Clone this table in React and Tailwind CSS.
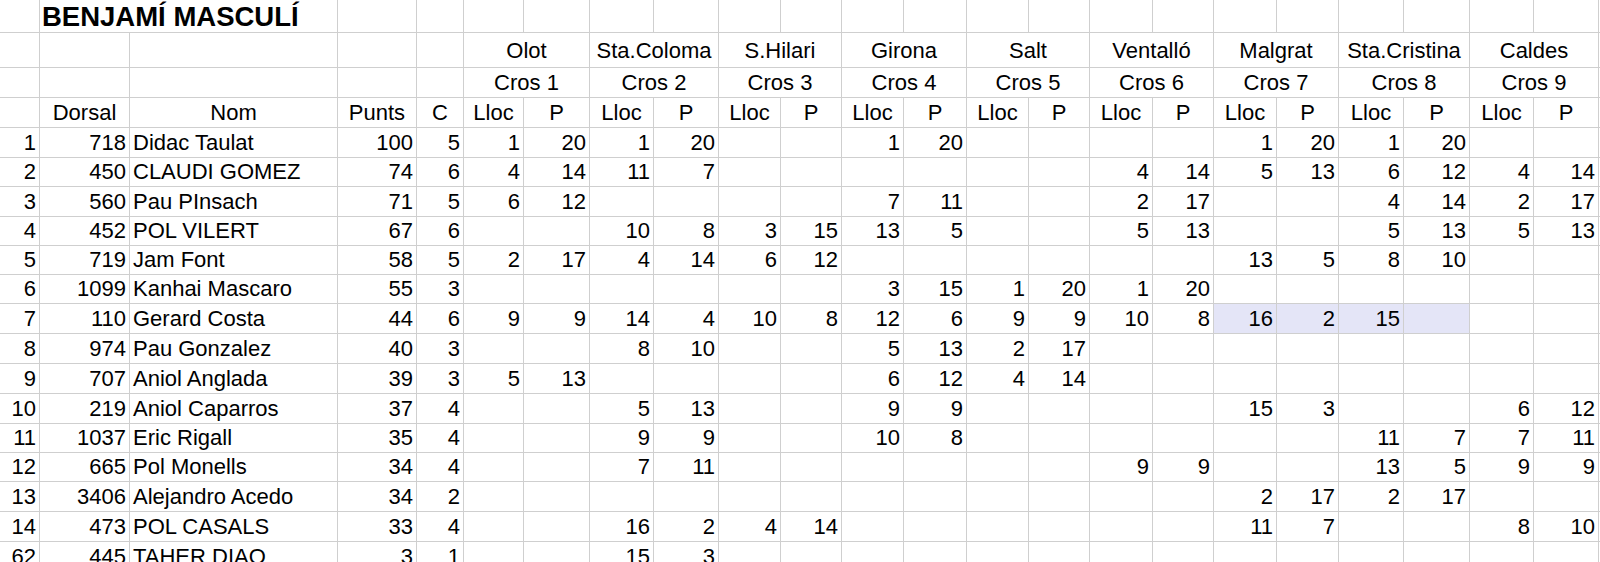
const cols =
  'grid grid-cols-[40px_90px_208px_79px_47px_60px_66px_64px_65px_62px_61px_62px_63px_62px_61px_63px_61px_63px_62px_65px_66px_64px_65px_60px]';

const cell = 'border-r border-b border-[#cfcfcf] overflow-visible whitespace-nowrap';

const races = [
  ['Olot', 'Cros 1'],
  ['Sta.Coloma', 'Cros 2'],
  ['S.Hilari', 'Cros 3'],
  ['Girona', 'Cros 4'],
  ['Salt', 'Cros 5'],
  ['Ventalló', 'Cros 6'],
  ['Malgrat', 'Cros 7'],
  ['Sta.Cristina', 'Cros 8'],
  ['Caldes', 'Cros 9'],
];

// [pos, dorsal, nom, punts, c, results (9 pairs), height class, highlighted result cells]
const rows = [
  ['1', '718', 'Didac Taulat', '100', '5', [[1, 20], [1, 20], [], [1, 20], [], [], [1, 20], [1, 20], []], 'h-[30px]'],
  ['2', '450', 'CLAUDI GOMEZ', '74', '6', [[4, 14], [11, 7], [], [], [], [4, 14], [5, 13], [6, 12], [4, 14]], 'h-[29px]'],
  ['3', '560', 'Pau PInsach', '71', '5', [[6, 12], [], [], [7, 11], [], [2, 17], [], [4, 14], [2, 17]], 'h-[30px]'],
  ['4', '452', 'POL VILERT', '67', '6', [[], [10, 8], [3, 15], [13, 5], [], [5, 13], [], [5, 13], [5, 13]], 'h-[29px]'],
  ['5', '719', 'Jam Font', '58', '5', [[2, 17], [4, 14], [6, 12], [], [], [], [13, 5], [8, 10], []], 'h-[29px]'],
  ['6', '1099', 'Kanhai Mascaro', '55', '3', [[], [], [], [3, 15], [1, 20], [1, 20], [], [], []], 'h-[29px]'],
  ['7', '110', 'Gerard Costa', '44', '6', [[9, 9], [14, 4], [10, 8], [12, 6], [9, 9], [10, 8], [16, 2], [15, ''], []], 'h-[30px]', [12, 13, 14, 15]],
  ['8', '974', 'Pau Gonzalez', '40', '3', [[], [8, 10], [], [5, 13], [2, 17], [], [], [], []], 'h-[30px]'],
  ['9', '707', 'Aniol Anglada', '39', '3', [[5, 13], [], [], [6, 12], [4, 14], [], [], [], []], 'h-[30px]'],
  ['10', '219', 'Aniol Caparros', '37', '4', [[], [5, 13], [], [9, 9], [], [], [15, 3], [], [6, 12]], 'h-[30px]'],
  ['11', '1037', 'Eric Rigall', '35', '4', [[], [9, 9], [], [10, 8], [], [], [], [11, 7], [7, 11]], 'h-[29px]'],
  ['12', '665', 'Pol Monells', '34', '4', [[], [7, 11], [], [], [], [9, 9], [], [13, 5], [9, 9]], 'h-[29px]'],
  ['13', '3406', 'Alejandro Acedo', '34', '2', [[], [], [], [], [], [], [2, 17], [2, 17], []], 'h-[30px]'],
  ['14', '473', 'POL CASALS', '33', '4', [[], [16, 2], [4, 14], [], [], [], [11, 7], [], [8, 10]], 'h-[30px]'],
  ['62', '445', 'TAHER DIAO', '3', '1', [[], [15, 3], [], [], [], [], [], [], []], 'h-[30px]'],
];

const Num = ({ children, hl }) => (
  <div className={`${cell} flex items-center justify-end pr-[3px] ${hl ? 'bg-[#e4e5f7]' : ''}`}>{children}</div>
);

export default function App() {
  return (
    <div className="w-[1600px] h-[562px] overflow-hidden bg-white text-black font-['Liberation_Sans',Arial,sans-serif] text-[22px] leading-none">
      {/* title row */}
      <div className={`${cols} h-[33px]`}>
        <div className={cell} />
        <div className={`${cell} col-span-2 flex items-center pl-[2px] pt-[1px] font-bold text-[27.5px]`}>BENJAMÍ MASCULÍ</div>
        <div className={cell} />
        <div className={cell} />
        {Array.from({ length: 19 }).map((_, i) => (
          <div key={i} className={cell} />
        ))}
      </div>

      {/* race names */}
      <div className={`${cols} h-[35px]`}>
        {Array.from({ length: 5 }).map((_, i) => (
          <div key={i} className={cell} />
        ))}
        {races.map(([city]) => (
          <div key={city} className={`${cell} col-span-2 flex items-end justify-center pb-[5px]`}>
            {city}
          </div>
        ))}
        <div className={cell} />
      </div>

      {/* cros numbers */}
      <div className={`${cols} h-[30px]`}>
        {Array.from({ length: 5 }).map((_, i) => (
          <div key={i} className={cell} />
        ))}
        {races.map(([city, cros]) => (
          <div key={cros} className={`${cell} col-span-2 flex items-center justify-center`}>
            {cros}
          </div>
        ))}
        <div className={cell} />
      </div>

      {/* column headings */}
      <div className={`${cols} h-[30px]`}>
        <div className={cell} />
        {['Dorsal', 'Nom', 'Punts', 'C'].map((h) => (
          <div key={h} className={`${cell} flex items-center justify-center`}>
            {h}
          </div>
        ))}
        {races.map(([city]) => [
          <div key={city + 'l'} className={`${cell} flex items-center justify-center`}>Lloc</div>,
          <div key={city + 'p'} className={`${cell} flex items-center justify-center`}>P</div>,
        ])}
        <div className={cell} />
      </div>

      {rows.map(([pos, dorsal, nom, punts, c, res, h, hl = []]) => (
        <div key={pos} className={`${cols} ${h}`}>
          <Num>{pos}</Num>
          <Num>{dorsal}</Num>
          <div className={`${cell} flex items-center pl-[3px]`}>{nom}</div>
          <Num>{punts}</Num>
          <Num>{c}</Num>
          {res.map((pair, i) => [
            <Num key={i + 'l'} hl={hl.includes(i * 2)}>{pair[0]}</Num>,
            <Num key={i + 'p'} hl={hl.includes(i * 2 + 1)}>{pair[1]}</Num>,
          ])}
          <div className={cell} />
        </div>
      ))}
    </div>
  );
}
